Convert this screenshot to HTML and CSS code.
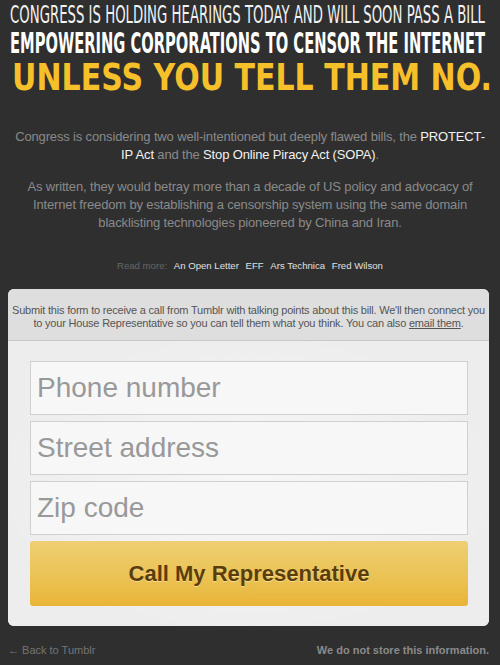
FILE: index.html
```html
<!DOCTYPE html>
<html>
<head>
<meta charset="utf-8">
<link rel="stylesheet" href="styles.css">
</head>
<body>
<div class="page">
  <svg class="headline" width="500" height="100" viewBox="0 0 500 100">
    <text class="h1" x="10" y="23" textLength="475" lengthAdjust="spacingAndGlyphs">CONGRESS IS HOLDING HEARINGS TODAY AND WILL SOON PASS A BILL</text>
    <text class="h2" x="10" y="53" textLength="475" lengthAdjust="spacingAndGlyphs">EMPOWERING CORPORATIONS TO CENSOR THE INTERNET</text>
    <text class="h3" x="12" y="90" textLength="480" lengthAdjust="spacingAndGlyphs">UNLESS YOU TELL THEM NO.</text>
  </svg>

  <div class="intro">
    <p>Congress is considering two well-intentioned but deeply flawed bills, the <a href="#">PROTECT-IP Act</a> and the <a href="#">Stop Online Piracy Act (SOPA)</a>.</p>
    <p>As written, they would betray more than a decade of US policy and advocacy of Internet freedom by establishing a censorship system using the same domain blacklisting technologies pioneered by China and Iran.</p>
  </div>

  <div class="readmore">
    <span class="rm-label">Read more:</span>
    <a href="#">An Open Letter</a>
    <a href="#">EFF</a>
    <a href="#">Ars Technica</a>
    <a href="#">Fred Wilson</a>
  </div>

  <div class="card">
    <div class="card-head">Submit this form to receive a call from Tumblr with talking points about this bill. We'll then connect you to your House Representative so you can tell them what you think. You can also <a href="#">email them</a>.</div>
    <div class="card-body">
      <div class="field">Phone number</div>
      <div class="field">Street address</div>
      <div class="field">Zip code</div>
      <div class="button">Call My Representative</div>
    </div>
  </div>

  <div class="footer">
    <a href="#" class="back">&larr; Back to Tumblr</a>
    <span class="nostore">We do not store this information.</span>
  </div>
</div>
</body>
</html>
```

FILE: styles.css
```css
html, body {
  margin: 0;
  padding: 0;
  background: #2f2f2f;
}
body {
  font-family: "Liberation Sans", Arial, sans-serif;
}
.page {
  width: 500px;
  height: 665px;
  overflow: hidden;
}
.headline {
  display: block;
}
.headline text {
  font-family: "DejaVu Sans", sans-serif;
  font-stretch: condensed;
}
.h1 {
  fill: #f2f2f2;
  font-size: 25px;
  font-weight: 400;
}
.h2 {
  fill: #ffffff;
  font-size: 28px;
  font-weight: 700;
}
.h3 {
  fill: #f6c02b;
  font-size: 38px;
  font-weight: 700;
  font-stretch: normal !important;
}
.intro {
  margin: 28px 10px 0;
  text-align: center;
  color: #8a8a8a;
  font-size: 13px;
  line-height: 18px;
  letter-spacing: -0.15px;
}
.intro p {
  margin: 0 0 14px;
}
.intro a {
  color: #f2f2f2;
  text-decoration: none;
}
.readmore {
  margin-top: 28px;
  text-align: center;
  font-size: 9.6px;
  color: #666;
}
.readmore a {
  color: #e0e0e0;
  text-decoration: none;
  margin-left: 4px;
}
.card {
  margin: 18px 0 0 8px;
  width: 481px;
  background: #efefef;
  border-radius: 6px;
  overflow: hidden;
}
.card-head {
  background: #dedede;
  border-bottom: 1px solid #c9c9c9;
  height: 52px;
  box-sizing: border-box;
  padding: 15px 4px 0;
  text-align: center;
  font-size: 11px;
  line-height: 13px;
  letter-spacing: -0.2px;
  color: #555;
}
.card-head a {
  color: #555;
  text-decoration: underline;
}
.card-body {
  padding: 20px 21px 20px 22px;
  background: radial-gradient(ellipse at center, #f7f7f7 0%, #ededed 75%);
  display: flex;
  flex-direction: column;
  gap: 6px;
}
.field {
  height: 54px;
  box-sizing: border-box;
  border: 1px solid #d0d0d0;
  background: #f7f7f7;
  font-size: 28px;
  line-height: 52px;
  padding-left: 6px;
  color: #999;
}
.button {
  height: 65px;
  border-radius: 3px;
  background: linear-gradient(to bottom, #eecf73 0%, #ebc458 50%, #e8b537 100%);
  text-align: center;
  font-size: 22px;
  font-weight: 700;
  line-height: 65px;
  color: #5a3d0a;
  text-shadow: 0 1px 0 rgba(255,240,190,0.6);
}
.footer {
  margin: 18px 11px 0 8px;
  display: flex;
  justify-content: space-between;
  font-size: 11px;
}
.back {
  color: #747474;
  text-decoration: none;
}
.nostore {
  color: #8a8a8a;
  font-weight: 700;
}
```
